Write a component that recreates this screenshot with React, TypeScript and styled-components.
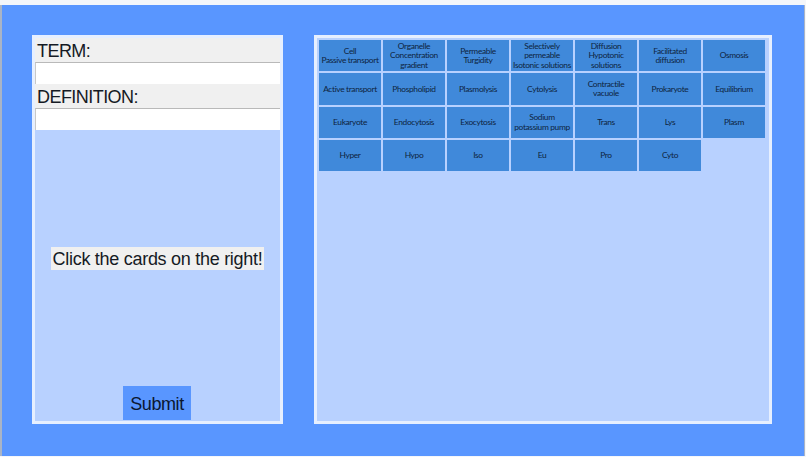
import React from "react";
import styled, { createGlobalStyle } from "styled-components";

const Global = createGlobalStyle`
  html, body { margin: 0; padding: 0; background: #f4f6fa; }
  #root { width: 806px; height: 457px; overflow: hidden; }
`;

const Page = styled.main`
  box-sizing: border-box;
  width: 806px;
  height: 457px;
  padding-top: 5px;
  padding-right: 1px;
  padding-bottom: 1px;
`;

const Stage = styled.div`
  box-sizing: border-box;
  height: 451px;
  background: #5996ff;
  border-left: 2px solid #a9b4c6;
  border-right: 1px solid #a9b4c6;
  padding: 30px 32px 32px 30px;
  display: flex;
  gap: 31px;
  align-items: flex-start;
`;

const Panel = styled.section<{ $width: number }>`
  box-sizing: border-box;
  width: ${(p) => p.$width}px;
  height: 389px;
  background: #b8d1ff;
  border: 3px solid #e6efff;
`;

const FormPanel = styled(Panel)`
  display: flex;
  flex-direction: column;
  font-family: "Liberation Sans", Arial, sans-serif;
  color: #151a24;
`;

const FieldLabel = styled.label<{ $height: number }>`
  box-sizing: border-box;
  display: block;
  height: ${(p) => p.$height}px;
  background: #f0f0f0;
  font-size: 18px;
  letter-spacing: -0.55px;
  line-height: 24px;
  padding: 1px 0 0 2px;
`;

const TextBox = styled.input`
  box-sizing: border-box;
  display: block;
  width: 100%;
  height: 22px;
  flex: none;
  margin: 0;
  padding: 0;
  background: #fff;
  border: 0;
  border-top: 1px solid #b9b9b9;
  border-left: 1px solid #c8c8c8;
  outline: none;
`;

const MessageArea = styled.div`
  flex: 1;
  display: flex;
  align-items: center;
  justify-content: center;
`;

const Message = styled.p`
  margin: 0;
  width: 213px;
  height: 23px;
  background: #f0f0f0;
  font-size: 18px;
  letter-spacing: -0.28px;
  line-height: 24px;
  text-align: center;
  white-space: nowrap;
`;

const SubmitButton = styled.button`
  align-self: center;
  width: 68px;
  height: 34px;
  flex: none;
  margin: 0 1px 1px 0;
  padding: 2px 0 0;
  background: #5996ff;
  border: 0;
  color: #0b1730;
  font-family: "Liberation Sans", Arial, sans-serif;
  font-size: 18px;
  letter-spacing: -0.4px;
  line-height: 32px;
`;

const CardPanel = styled(Panel)`
  padding: 2px 0 0 2px;
`;

const CardGrid = styled.div`
  display: grid;
  grid-template-columns: repeat(7, 62px);
  grid-auto-rows: 31.4px;
  gap: 1.9px 2px;
`;

const Card = styled.button`
  display: flex;
  flex-direction: column;
  align-items: center;
  justify-content: center;
  margin: 0;
  padding: 1px 0 0;
  background: #4089da;
  border: 0;
  color: #0e2440;
  font-family: "Lato", "Noto Sans", sans-serif;
  font-size: 8.4px;
  letter-spacing: -0.35px;
  line-height: 9.6px;
  text-align: center;
  white-space: nowrap;
`;

const cards: string[][] = [
  ["Cell", "Passive transport"],
  ["Organelle", "Concentration", "gradient"],
  ["Permeable", "Turgidity"],
  ["Selectively", "permeable", "Isotonic solutions"],
  ["Diffusion", "Hypotonic", "solutions"],
  ["Facilitated", "diffusion"],
  ["Osmosis"],
  ["Active transport"],
  ["Phospholipid"],
  ["Plasmolysis"],
  ["Cytolysis"],
  ["Contractile", "vacuole"],
  ["Prokaryote"],
  ["Equilibrium"],
  ["Eukaryote"],
  ["Endocytosis"],
  ["Exocytosis"],
  ["Sodium", "potassium pump"],
  ["Trans"],
  ["Lys"],
  ["Plasm"],
  ["Hyper"],
  ["Hypo"],
  ["Iso"],
  ["Eu"],
  ["Pro"],
  ["Cyto"],
];

export default function App() {
  return (
    <Page>
      <Global />
      <Stage>
        <FormPanel $width={251}>
          <FieldLabel $height={24} htmlFor="term">TERM:</FieldLabel>
          <TextBox id="term" />
          <FieldLabel $height={24} htmlFor="definition">DEFINITION:</FieldLabel>
          <TextBox id="definition" />
          <MessageArea>
            <Message>Click the cards on the right!</Message>
          </MessageArea>
          <SubmitButton>Submit</SubmitButton>
        </FormPanel>
        <CardPanel $width={458}>
          <CardGrid>
            {cards.map((lines) => (
              <Card key={lines.join(" ")}>
                {lines.map((line) => (
                  <span key={line}>{line}</span>
                ))}
              </Card>
            ))}
          </CardGrid>
        </CardPanel>
      </Stage>
    </Page>
  );
}
